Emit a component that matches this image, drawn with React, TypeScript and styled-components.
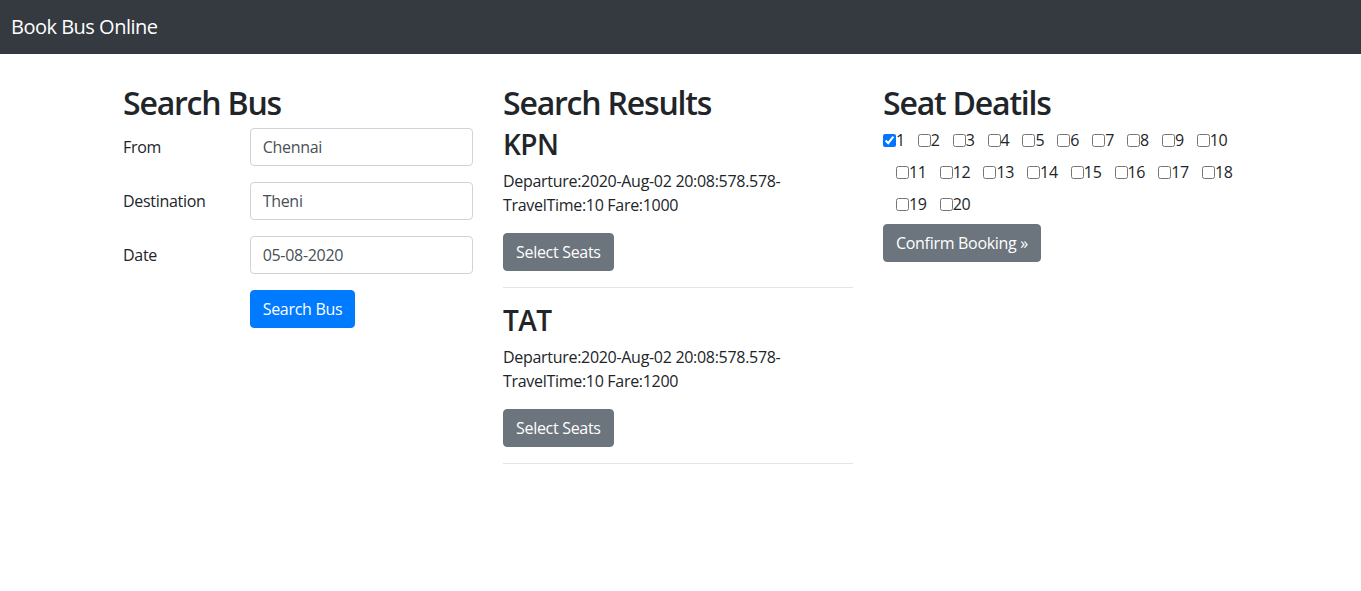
import React from "react";
import styled, { createGlobalStyle } from "styled-components";

const Global = createGlobalStyle`
  * { box-sizing: border-box; }
  body {
    margin: 0;
    font-family: "Segoe UI", "Open Sans", "Noto Sans", sans-serif;
    font-size: 16px;
    line-height: 1.5;
    letter-spacing: -0.3px;
    color: #212529;
    background: #fff;
  }
`;

const Navbar = styled.nav`
  height: 54px;
  background: #343a40;
  display: flex;
  align-items: center;
  padding: 0 11px;
`;

const Brand = styled.a`
  color: #fff;
  font-size: 20px;
  line-height: 30px;
  letter-spacing: -0.5px;
  text-decoration: none;
`;

const Container = styled.main`
  width: 1140px;
  margin-left: max(0px, calc(50% - 572.5px));
  padding-top: 27px;
  display: grid;
  grid-template-columns: repeat(3, 380px);
`;

const Column = styled.section`
  padding: 0 15px;
`;

const H2 = styled.h2`
  margin: 0 0 6px;
  padding-top: 3px;
  font-size: 32px;
  font-weight: 600;
  line-height: 1.2;
  letter-spacing: -1.2px;
`;

const H3 = styled.h3`
  margin: 0 0 7px;
  font-size: 28px;
  font-weight: 600;
  line-height: 1.2;
  letter-spacing: -0.6px;
`;

const FormRow = styled.div`
  display: grid;
  grid-template-columns: 96.67px 223.33px;
  column-gap: 30px;
  margin-bottom: 16px;
`;

const Label = styled.label`
  padding-top: 7px;
  padding-bottom: 7px;
  line-height: 1.5;
`;

const Input = styled.input`
  display: block;
  width: 100%;
  height: 38px;
  padding: 6px 12px;
  font: inherit;
  font-size: 16px;
  line-height: 1.5;
  letter-spacing: -0.3px;
  color: #495057;
  background: #fff;
  border: 1px solid #ced4da;
  border-radius: 4px;
`;

const Button = styled.button<{ $variant: "primary" | "secondary" }>`
  display: inline-block;
  height: 38px;
  padding: 6px 12px;
  font: inherit;
  font-size: 16px;
  line-height: 1.5;
  letter-spacing: -0.3px;
  color: #fff;
  background: ${(p) => (p.$variant === "primary" ? "#007bff" : "#6c757d")};
  border: 1px solid ${(p) => (p.$variant === "primary" ? "#007bff" : "#6c757d")};
  border-radius: 4px;
  cursor: pointer;
`;

const Result = styled.article`
  display: flex;
  flex-direction: column;
  align-items: flex-start;
`;

const Para = styled.p`
  margin: 0 0 16px;
`;

const Divider = styled.hr`
  align-self: stretch;
  margin: 16px 0;
  border: 0;
  border-top: 1px solid rgba(0, 0, 0, 0.1);
`;

const SeatRows = styled.div`
  display: flex;
  flex-direction: column;
  row-gap: 8px;
  margin-bottom: 8px;
`;

const SeatRow = styled.div<{ $indent: boolean }>`
  display: flex;
  height: 24px;
  align-items: center;
  padding-left: ${(p) => (p.$indent ? "13px" : "0")};
`;

const Seat = styled.label`
  display: inline-flex;
  align-items: center;
  margin-right: 13px;
  line-height: 24px;
`;

const Check = styled.input`
  width: 13px;
  height: 13px;
  margin: 0;
`;

const results = [
  { name: "KPN", fare: 1000 },
  { name: "TAT", fare: 1200 },
];

const seatRows = [
  [1, 2, 3, 4, 5, 6, 7, 8, 9, 10],
  [11, 12, 13, 14, 15, 16, 17, 18],
  [19, 20],
];

export default function App() {
  return (
    <>
      <Global />
      <Navbar>
        <Brand href="#">Book Bus Online</Brand>
      </Navbar>
      <Container>
        <Column>
          <H2>Search Bus</H2>
          <FormRow>
            <Label>From</Label>
            <Input defaultValue="Chennai" />
          </FormRow>
          <FormRow>
            <Label>Destination</Label>
            <Input defaultValue="Theni" />
          </FormRow>
          <FormRow>
            <Label>Date</Label>
            <Input defaultValue="05-08-2020" />
          </FormRow>
          <FormRow>
            <span />
            <div>
              <Button $variant="primary">Search Bus</Button>
            </div>
          </FormRow>
        </Column>
        <Column>
          <H2>Search Results</H2>
          {results.map((r) => (
            <Result key={r.name}>
              <H3>{r.name}</H3>
              <Para>
                Departure:2020-Aug-02 20:08:578.578-TravelTime:10 Fare:{r.fare}
              </Para>
              <Button $variant="secondary">Select Seats</Button>
              <Divider />
            </Result>
          ))}
        </Column>
        <Column>
          <H2>Seat Deatils</H2>
          <SeatRows>
            {seatRows.map((row, i) => (
              <SeatRow key={i} $indent={i > 0}>
                {row.map((n) => (
                  <Seat key={n}>
                    <Check type="checkbox" defaultChecked={n === 1} />
                    {n}
                  </Seat>
                ))}
              </SeatRow>
            ))}
          </SeatRows>
          <Button $variant="secondary">Confirm Booking »</Button>
        </Column>
      </Container>
    </>
  );
}
